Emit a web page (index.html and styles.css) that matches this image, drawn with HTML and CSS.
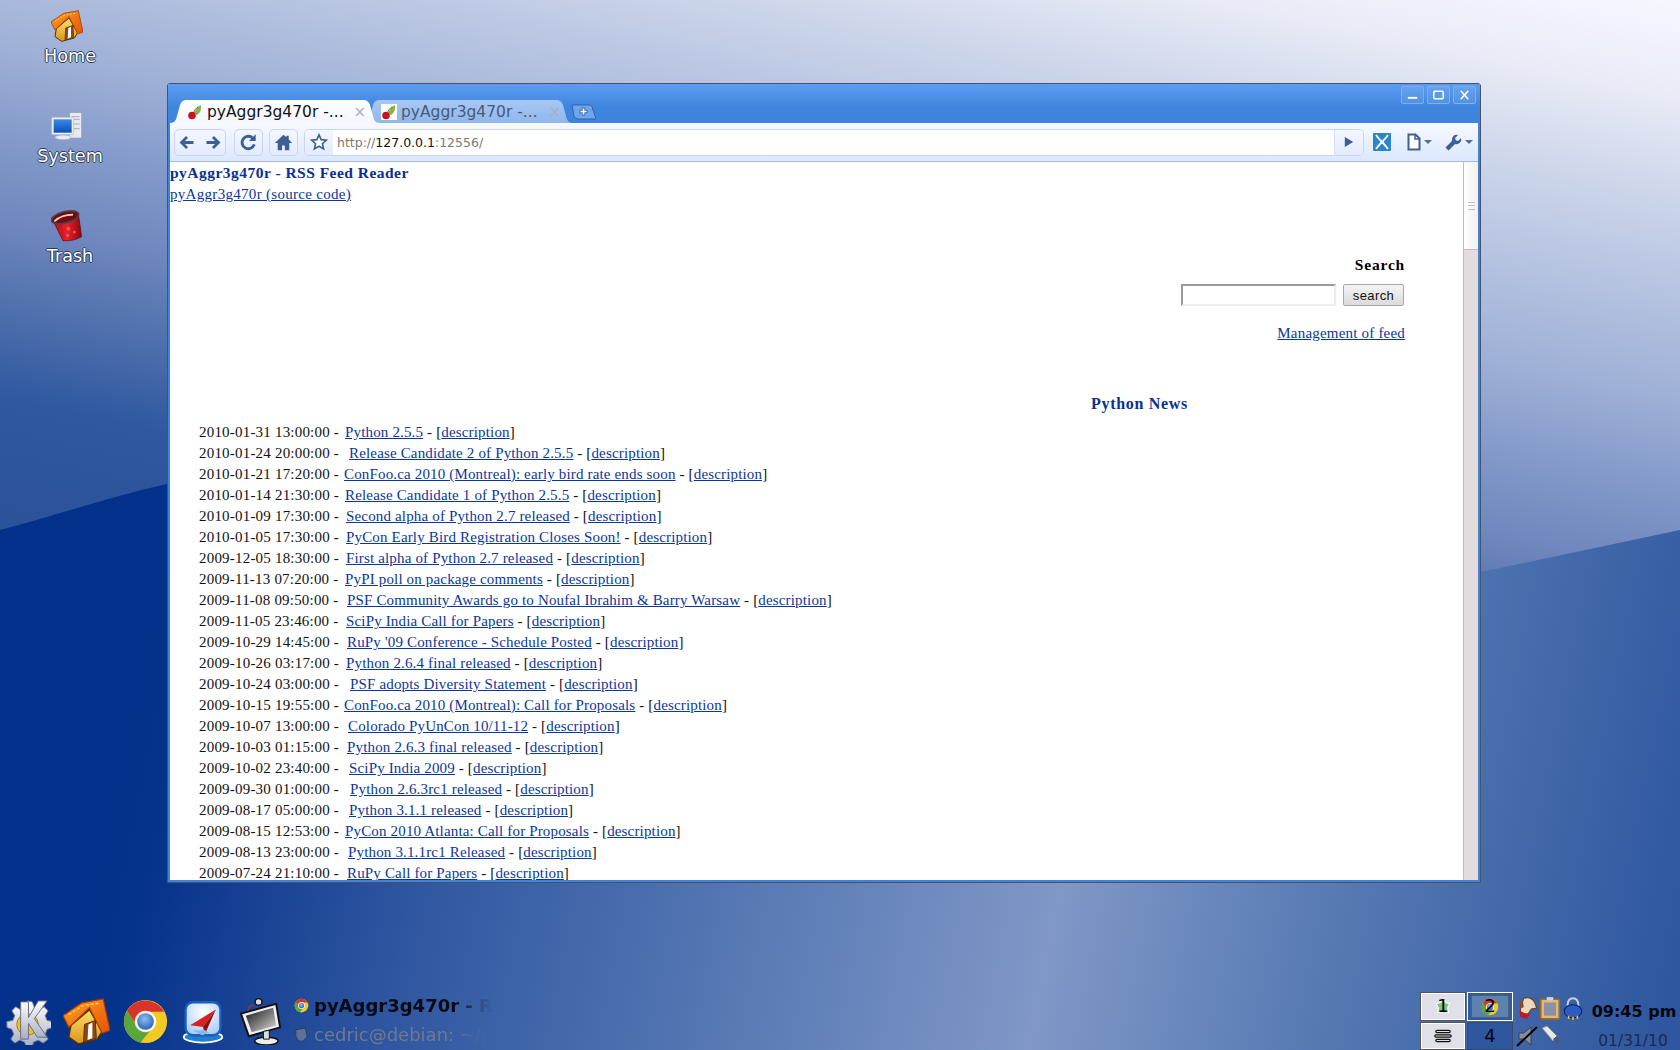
FILE: index.html
```html
<!DOCTYPE html>
<html lang="en">
<head>
<meta charset="utf-8">
<title>pyAggr3g470r</title>
<link rel="stylesheet" href="styles.css">
</head>
<body>
<svg class="sprites" width="0" height="0" aria-hidden="true">
  <defs>
    <linearGradient id="roof" x1="0" y1="0" x2="1" y2="1"><stop offset="0" stop-color="#ffa21e"/><stop offset="1" stop-color="#e8500a"/></linearGradient>
    <linearGradient id="wall" x1="0" y1="0" x2="0" y2="1"><stop offset="0" stop-color="#ffe06a"/><stop offset="1" stop-color="#d9961c"/></linearGradient>
    <linearGradient id="screen" x1="0" y1="0" x2="0" y2="1"><stop offset="0" stop-color="#3a8ae8"/><stop offset="1" stop-color="#0b50b8"/></linearGradient>
    <linearGradient id="bucket" x1="0" y1="0" x2="1" y2="0"><stop offset="0" stop-color="#a80a16"/><stop offset=".5" stop-color="#e8202c"/><stop offset="1" stop-color="#8c0810"/></linearGradient>
    <linearGradient id="metal" x1="0" y1="0" x2="0" y2="1"><stop offset="0" stop-color="#fff"/><stop offset="1" stop-color="#a9adc0"/></linearGradient>
    <linearGradient id="crt" x1="0" y1="0" x2="1" y2="1"><stop offset="0" stop-color="#111"/><stop offset="1" stop-color="#ddd"/></linearGradient>
    <radialGradient id="dial" cx=".5" cy=".3" r=".8"><stop offset="0" stop-color="#fff"/><stop offset="1" stop-color="#9fc8f5"/></radialGradient>
    <radialGradient id="iris" cx=".45" cy=".35" r=".7"><stop offset="0" stop-color="#8cc0f0"/><stop offset="1" stop-color="#1f5fb8"/></radialGradient>
    <symbol id="home" viewBox="0 0 48 48">
      <path d="M8 28 L27 12 L40 34 L35 42 L16 47 L6 40 Z" fill="url(#wall)" stroke="#5c2c04" stroke-width="1.500"/>
      <path d="M0 18 L19 5 L41 1 L48 33 L40 36 L27 10 L6 30 Z" fill="url(#roof)" stroke="#a23c04" stroke-width="1.200"/>
      <path d="M6 17 L20 8 L38 5" fill="none" stroke="#ffd060" stroke-width="1.500" stroke-dasharray="3 2"/>
      <path d="M21 45 L22 27 L33 23 L34 41 Z" fill="#8c4a10" stroke="#5a2c04"/>
      <path d="M25 43 L26 27 L30 25 L30 41 Z" fill="#fff"/>
    </symbol>
    <symbol id="chrome" viewBox="0 0 48 48">
      <circle cx="24" cy="24" r="22" fill="#f3c924"/>
      <path d="M24 14H43A22 22 0 0 0 5 13L14.500 27A10 10 0 0 1 24 14Z" fill="#d8342a"/>
      <path d="M5 13L14.500 27A10 10 0 0 0 29 33L19 45.400A22 22 0 0 1 5 13Z" fill="#5aa53c"/>
      <circle cx="24" cy="24" r="11" fill="#fff" fill-opacity=".85"/>
      <circle cx="24" cy="24" r="8.500" fill="url(#iris)"/>
    </symbol>
    <symbol id="cherry" viewBox="0 0 16 16">
      <path d="M7 10 Q9 3 14 1 Q15 8 10 11 Z" fill="#8db04a"/>
      <path d="M6 10 Q7 5 11 3" stroke="#6a7a3a" fill="none"/>
      <circle cx="5" cy="11.500" r="3.800" fill="#c8141c"/>
    </symbol>
  </defs>
</svg>

<main class="desktop">
  <svg class="wallpaper" viewBox="0 0 1680 1050" preserveAspectRatio="none" aria-hidden="true">
    <defs>
      <linearGradient id="sky" gradientUnits="userSpaceOnUse" x1="1680" y1="0" x2="1503" y2="843">
        <stop offset="0" stop-color="#f7f7fe"/>
        <stop offset=".114" stop-color="#e8ebf6"/>
        <stop offset=".227" stop-color="#ccd5ea"/>
        <stop offset=".341" stop-color="#b5c2e0"/>
        <stop offset=".455" stop-color="#9eb0d6"/>
        <stop offset=".568" stop-color="#8097c8"/>
        <stop offset=".648" stop-color="#7188bf"/>
        <stop offset=".716" stop-color="#5a78b2"/>
        <stop offset=".852" stop-color="#2f589f"/>
        <stop offset="1" stop-color="#2c5299"/>
      </linearGradient>
      <linearGradient id="sea" gradientUnits="userSpaceOnUse" x1="0" y1="950" x2="1680" y2="1286">
        <stop offset="0" stop-color="#02308a"/>
        <stop offset=".074" stop-color="#05328b"/>
        <stop offset=".23" stop-color="#2f56a0"/>
        <stop offset=".366" stop-color="#4a6fae"/>
        <stop offset=".6" stop-color="#8097c7"/>
        <stop offset=".77" stop-color="#5478b2"/>
        <stop offset=".96" stop-color="#2f579f"/>
      </linearGradient>
    </defs>
    <rect width="1680" height="1050" fill="url(#sky)"/>
    <path d="M0 530 C60 514 120 494 167 484 L1481 572 L1680 530 V1050 H0 Z" fill="url(#sea)"/>
  </svg>

  <a class="icon icon-home" href="#">
    <svg class="icon-art" viewBox="0 0 48 48"><use href="#home"/></svg>
    <span class="icon-label">Home</span>
  </a>
  <a class="icon icon-system" href="#">
    <svg class="icon-art" viewBox="0 0 48 48">
      <rect x="28" y="4" width="18" height="38" fill="#e8eaf0" stroke="#9a9eb0"/>
      <path d="M31 10h12M31 14h12M31 21h12M31 28h12" stroke="#a8acbc" stroke-width="1.500"/>
      <rect x="1" y="11" width="33" height="26" rx="2" fill="#eef0f6" stroke="#b4b8c8"/>
      <rect x="4" y="14" width="27" height="20" fill="url(#screen)"/>
      <ellipse cx="18" cy="41" rx="12" ry="3.500" fill="#e8eaf0" stroke="#a8acbc"/>
    </svg>
    <span class="icon-label">System</span>
  </a>
  <a class="icon icon-trash" href="#">
    <svg class="icon-art" viewBox="0 0 48 48">
      <path d="M2 14 L18 46 Q34 47 46 40 L41 6 Z" fill="url(#bucket)" stroke="#5a050a"/>
      <ellipse cx="21" cy="11" rx="21" ry="8.500" transform="rotate(-14 21 11)" fill="#7a0810" stroke="#45454d" stroke-width="2.400"/>
      <path d="M5 17 Q16 7 33 7" stroke="#f5d8c0" stroke-width="2.400" fill="none"/>
      <circle cx="26" cy="28" r="3" fill="#f05058"/><circle cx="35" cy="33" r="2.400" fill="#f05058"/><circle cx="25" cy="38" r="2.400" fill="#f05058"/>
    </svg>
    <span class="icon-label">Trash</span>
  </a>

  <section class="window">
    <header class="titlebar">
      <div class="tabstrip">
        <div class="tab tab-active">
          <svg class="favicon" viewBox="0 0 16 16"><use href="#cherry"/></svg>
          <span class="tab-title">pyAggr3g470r -...</span>
          <span class="tab-close">×</span>
        </div>
        <div class="tab tab-idle">
          <svg class="favicon favicon-white" viewBox="0 0 16 16"><use href="#cherry"/></svg>
          <span class="tab-title">pyAggr3g470r -...</span>
          <span class="tab-close">×</span>
        </div>
        <svg class="tab-new" viewBox="0 0 27 16" width="27" height="16"><path d="M2 1H19Q21 1 22 3L26 15H8Q5 15 4 12Z" fill="#6fa5ea" stroke="#2f65b5"/><path d="M13.500 3.500v8M9.500 7.500h8" stroke="#3c6db5" stroke-width="3.400"/><path d="M13.500 4.500v6M10.500 7.500h6" stroke="#fff" stroke-width="1.600"/></svg>
      </div>
      <div class="winbtns">
        <span class="winbtn"><svg viewBox="0 0 22 17"><path d="M6 11.500h10" stroke="#fff" stroke-width="2"/></svg></span>
        <span class="winbtn"><svg viewBox="0 0 22 17"><rect x="6" y="4.500" width="10" height="8" rx="1" fill="none" stroke="#fff" stroke-width="1.600"/></svg></span>
        <span class="winbtn"><svg viewBox="0 0 22 17"><path d="M7 4l8 9M15 4l-8 9" stroke="#fff" stroke-width="1.800"/></svg></span>
      </div>
    </header>

    <nav class="toolbar">
      <div class="navbtn navbtn-pair">
        <svg viewBox="0 0 27 26"><path d="M20 13H8M13 7l-6 6 6 6" fill="none" stroke="#3d5f94" stroke-width="3"/></svg>
        <svg viewBox="0 0 27 26"><path d="M7 13h12M14 7l6 6-6 6" fill="none" stroke="#3d5f94" stroke-width="3"/></svg>
      </div>
      <div class="navbtn navbtn-one">
        <svg viewBox="0 0 28 26"><path d="M20 15a6.500 6.500 0 1 1-1.500-6.500" fill="none" stroke="#3d5f94" stroke-width="3"/><path d="M21.500 4.500v7h-7z" fill="#3d5f94"/></svg>
      </div>
      <div class="navbtn navbtn-one">
        <svg viewBox="0 0 28 26"><path d="M14 5L5 13.500h3V21h4.500v-5h3v5H20v-7.500h3L19.500 10V6h-2.500v1.500z" fill="#3d5f94"/></svg>
      </div>
      <div class="omnibox">
        <div class="star">
          <svg viewBox="0 0 20 20" width="18" height="18"><path d="M10 2l2.400 5.400 5.800.6-4.400 3.900 1.300 5.700L10 14.700l-5.100 2.900 1.300-5.700L1.800 8l5.800-.6z" fill="#fff" stroke="#3d5f94" stroke-width="1.800"/></svg>
        </div>
        <div class="url"><span class="url-dim">http://</span>127.0.0.1<span class="url-dim">:12556/</span></div>
        <div class="go"><svg viewBox="0 0 12 14" width="10" height="12"><path d="M1 1l10 6-10 6z" fill="#3d5f94"/></svg></div>
      </div>
      <div class="ext">
        <svg viewBox="0 0 18 18" width="18" height="18"><rect width="18" height="18" rx="1" fill="#2a86c8"/><path d="M3 2c2 3 4 5 6 7-2 2-4 4-6 7M15 2c-2 3-4 5-6 7 2 2 4 4 6 7" fill="none" stroke="#fff" stroke-width="1.800"/></svg>
      </div>
      <div class="menu menu-page">
        <svg viewBox="0 0 14 18" width="14" height="18"><path d="M1.500 1.500h7l4 4v11h-11z" fill="#fff" stroke="#3d5f94" stroke-width="2"/><path d="M8 1.500v4.500h4.500" fill="none" stroke="#3d5f94" stroke-width="1.500"/></svg>
        <span class="caret"></span>
      </div>
      <div class="menu menu-tool">
        <svg viewBox="0 0 18 18" width="18" height="18"><path d="M1.500 14.500L8 8a4.800 4.800 0 0 1 6-6l-3 3 .8 2.200 2.200.8 3-3a4.800 4.800 0 0 1-6 6L4.500 17.500z" fill="#3d5f94"/></svg>
        <span class="caret"></span>
      </div>
    </nav>

    <div class="viewport">
      <article class="page">
        <h1 class="page-title">pyAggr3g470r - RSS Feed Reader</h1>
        <a class="source-link" href="#">pyAggr3g470r (source code)</a>
        <form class="search">
          <h2 class="search-title">Search</h2>
          <div class="search-row">
            <input class="search-input" type="text">
            <button class="search-btn" type="button">search</button>
          </div>
          <a class="manage" href="#">Management of feed</a>
        </form>
        <h2 class="feed-title">Python News</h2>
        <ul class="feed">
          <li><span class="stamp" style="width:147px">2010-01-31 13:00:00 -</span><a href="#">Python 2.5.5</a> - [<a href="#">description</a>]</li>
          <li><span class="stamp" style="width:151px">2010-01-24 20:00:00 -</span><a href="#">Release Candidate 2 of Python 2.5.5</a> - [<a href="#">description</a>]</li>
          <li><span class="stamp" style="width:146px">2010-01-21 17:20:00 -</span><a href="#">ConFoo.ca 2010 (Montreal): early bird rate ends soon</a> - [<a href="#">description</a>]</li>
          <li><span class="stamp" style="width:147px">2010-01-14 21:30:00 -</span><a href="#">Release Candidate 1 of Python 2.5.5</a> - [<a href="#">description</a>]</li>
          <li><span class="stamp" style="width:148px">2010-01-09 17:30:00 -</span><a href="#">Second alpha of Python 2.7 released</a> - [<a href="#">description</a>]</li>
          <li><span class="stamp" style="width:148px">2010-01-05 17:30:00 -</span><a href="#">PyCon Early Bird Registration Closes Soon!</a> - [<a href="#">description</a>]</li>
          <li><span class="stamp" style="width:148px">2009-12-05 18:30:00 -</span><a href="#">First alpha of Python 2.7 released</a> - [<a href="#">description</a>]</li>
          <li><span class="stamp" style="width:147px">2009-11-13 07:20:00 -</span><a href="#">PyPI poll on package comments</a> - [<a href="#">description</a>]</li>
          <li><span class="stamp" style="width:149px">2009-11-08 09:50:00 -</span><a href="#">PSF Community Awards go to Noufal Ibrahim &amp; Barry Warsaw</a> - [<a href="#">description</a>]</li>
          <li><span class="stamp" style="width:148px">2009-11-05 23:46:00 -</span><a href="#">SciPy India Call for Papers</a> - [<a href="#">description</a>]</li>
          <li><span class="stamp" style="width:149px">2009-10-29 14:45:00 -</span><a href="#">RuPy '09 Conference - Schedule Posted</a> - [<a href="#">description</a>]</li>
          <li><span class="stamp" style="width:148px">2009-10-26 03:17:00 -</span><a href="#">Python 2.6.4 final released</a> - [<a href="#">description</a>]</li>
          <li><span class="stamp" style="width:152px">2009-10-24 03:00:00 -</span><a href="#">PSF adopts Diversity Statement</a> - [<a href="#">description</a>]</li>
          <li><span class="stamp" style="width:146px">2009-10-15 19:55:00 -</span><a href="#">ConFoo.ca 2010 (Montreal): Call for Proposals</a> - [<a href="#">description</a>]</li>
          <li><span class="stamp" style="width:150px">2009-10-07 13:00:00 -</span><a href="#">Colorado PyUnCon 10/11-12</a> - [<a href="#">description</a>]</li>
          <li><span class="stamp" style="width:149px">2009-10-03 01:15:00 -</span><a href="#">Python 2.6.3 final released</a> - [<a href="#">description</a>]</li>
          <li><span class="stamp" style="width:151px">2009-10-02 23:40:00 -</span><a href="#">SciPy India 2009</a> - [<a href="#">description</a>]</li>
          <li><span class="stamp" style="width:152px">2009-09-30 01:00:00 -</span><a href="#">Python 2.6.3rc1 released</a> - [<a href="#">description</a>]</li>
          <li><span class="stamp" style="width:151px">2009-08-17 05:00:00 -</span><a href="#">Python 3.1.1 released</a> - [<a href="#">description</a>]</li>
          <li><span class="stamp" style="width:147px">2009-08-15 12:53:00 -</span><a href="#">PyCon 2010 Atlanta: Call for Proposals</a> - [<a href="#">description</a>]</li>
          <li><span class="stamp" style="width:150px">2009-08-13 23:00:00 -</span><a href="#">Python 3.1.1rc1 Released</a> - [<a href="#">description</a>]</li>
          <li><span class="stamp" style="width:149px">2009-07-24 21:10:00 -</span><a href="#">RuPy Call for Papers</a> - [<a href="#">description</a>]</li>
        </ul>
      </article>
      <div class="scrollbar"><div class="thumb"><span class="grip"></span></div></div>
    </div>
  </section>

  <footer class="panel">
    <div class="launchers">
      <svg class="launch" viewBox="0 0 48 48">
        <path d="M24 3l5 1 2 6 5 2 5-3 4 4-3 5 2 5 6 1v6l-6 2-2 5 3 5-5 4-5-3-5 2-1 5h-6l-2-5-5-2-5 3-4-4 3-5-2-5-5-2v-6l6-1 2-5-3-5 4-4 5 3 5-2z" fill="url(#metal)" stroke="#7c8094"/>
        <circle cx="24" cy="27" r="11" fill="#f0c020" stroke="#a08018"/>
        <path d="M17 4h8v16L35 3h9L31 21l13 19h-10L25 26v16h-8z" fill="url(#metal)" stroke="#6a6e84"/>
      </svg>
      <svg class="launch" viewBox="0 0 48 48"><use href="#home"/></svg>
      <svg class="launch" viewBox="0 0 48 48"><use href="#chrome"/></svg>
      <svg class="launch launch-mail" viewBox="0 0 48 48">
        <ellipse cx="24" cy="41" rx="21" ry="6" fill="#1f7fd0" stroke="#fff" stroke-width="2"/>
        <rect x="5" y="3" width="38" height="36" rx="8" fill="url(#dial)" stroke="#1a5fc0" stroke-width="2.500"/>
        <path d="M38 11L10 28l14 2z" fill="#d82020"/><path d="M38 11L24 30l2 8z" fill="#8a1010"/>
        <path d="M13 34l12-1 6 3-8 3z" fill="#8fb8e8"/>
      </svg>
      <svg class="launch" viewBox="0 0 48 48">
        <path d="M4 16L40 6l4 24-32 9z" fill="#f0f0f0" stroke="#111" stroke-width="2"/>
        <path d="M9 18L37 10l3 18-25 7z" fill="url(#crt)"/>
        <ellipse cx="30" cy="44" rx="12" ry="4" fill="#eee" stroke="#111" stroke-width="1.500"/>
        <path d="M27 34v8h6v-9z" fill="#ddd" stroke="#111"/>
        <circle cx="22" cy="4" r="3.500" fill="#ddd" stroke="#111" stroke-width="1.500"/>
        <path d="M17 8 Q12 6 11 13" stroke="#a03030" stroke-width="1.500" fill="none"/>
      </svg>
    </div>
    <div class="tasks">
      <div class="task task-active"><svg class="task-ico" viewBox="0 0 48 48"><use href="#chrome"/></svg><span>pyAggr3g470r - R</span></div>
      <div class="task task-idle">
        <svg class="task-ico" viewBox="0 0 16 16"><path d="M2 3l10-2 2 9-4 5H5L2 10z" fill="#5f7196" stroke="#2c3c5e"/></svg>
        <span>cedric@debian: ~/p</span>
      </div>
    </div>
    <div class="spacer"></div>
    <div class="pager">
      <div class="desk desk-light"><svg viewBox="0 0 16 16" width="18" height="18"><path d="M8 1l2 3 4 1-2 4 1 4-5-1-5 1 1-4-2-4 4-1z" fill="#7cc47a" stroke="#fff"/></svg><b>1</b></div>
      <div class="desk desk-current"><span class="desk-inner"><svg viewBox="0 0 48 48" width="18" height="18"><use href="#chrome"/></svg></span><b>2</b></div>
      <div class="desk desk-light"><svg viewBox="0 0 20 14" width="20" height="14"><path d="M4 2.500h12M3 7h14M4 11.500h12" stroke="#111" stroke-width="3.600" stroke-linecap="round"/><path d="M4 2.500h12M3 7h14M4 11.500h12" stroke="#ddd" stroke-width="1" stroke-linecap="round"/></svg></div>
      <div class="desk desk-dark"><b>4</b></div>
    </div>
    <div class="tray">
      <svg viewBox="0 0 20 22"><path d="M7 2q7-2 10 4l2 5-5 1-2 3-2 2-6-2 0-5 2-5z" fill="#ecd8bc" stroke="#6a4020"/><path d="M3 13l5 3 5 0-3 5-6-2z" fill="#c01824"/><path d="M6 3q-4 3-2 9l3-2z" fill="#8a4a28"/></svg>
      <svg viewBox="0 0 20 22"><rect x="1.500" y="3" width="17" height="18" rx="1" fill="#e0b878" stroke="#a06a20" stroke-width="1.500"/><rect x="4.500" y="6" width="11" height="12" fill="#8a90a8"/><rect x="7" y="1" width="6" height="3" fill="#d0d4de"/></svg>
      <svg viewBox="0 0 20 22"><path d="M5 9q0-7 5-7t5 7" fill="none" stroke="#c8d0e0" stroke-width="1.800"/><path d="M2 14a8 6 0 0 1 16 0 8 6 0 0 1-16 0z" fill="#2c5cc0" stroke="#0c2060"/><path d="M6 18v3M10 19v3M14 18v3" stroke="#f0c020" stroke-width="1.500"/></svg>
      <svg viewBox="0 0 22 22"><path d="M3 8h5l7-6v18l-7-6H3z" fill="#8a8e9c" stroke="#3a3e50"/><path d="M1 21L21 2" stroke="#000" stroke-width="2"/></svg>
      <svg viewBox="0 0 22 22"><path d="M3 3l5-2 10 10-4 5z" fill="#e8e8e8" stroke="#8a8a8a"/><path d="M14 14l4-3 3 5-2 3z" fill="#4a5878"/></svg>
    </div>
    <div class="clock">
      <div class="time">09:45 pm</div>
      <div class="date">01/31/10</div>
    </div>
  </footer>
</main>
</body>
</html>
```

FILE: styles.css
```css
* { box-sizing: border-box; }
html, body { margin: 0; padding: 0; }
body { width: 1680px; height: 1050px; overflow: hidden; font-family: "DejaVu Sans", sans-serif; }
.sprites { position: absolute; }
.desktop { position: relative; width: 1680px; height: 1050px; overflow: hidden; background: #3f62a6; }
.wallpaper { position: absolute; inset: 0; width: 1680px; height: 1050px; }

.icon { position: absolute; width: 100px; left: 20px; display: flex; flex-direction: column; align-items: center; text-decoration: none; }
.icon-home { top: 10px; }
.icon-system { top: 110px; }
.icon-trash { top: 210px; }
.icon-art { width: 32px; height: 32px; margin-right: 6px; }
.icon-label { margin-top: 4px; font-size: 17.600px; line-height: 20px; color: #fff;
  text-shadow: -1px 0 #2b3a5e, 1px 0 #2b3a5e, 0 -1px #2b3a5e, 0 1px #2b3a5e; }

.window { position: absolute; left: 167px; top: 83px; width: 1314px; height: 800px; display: flex; flex-direction: column;
  padding: 0 2px 2px; border: 1px solid #4a5264; border-radius: 3px 3px 0 0; background: #3e84dc; }
.titlebar { height: 39px; flex: none; display: flex; justify-content: space-between; margin: 0 -2px; padding: 0 4px 0 2px;
  background: linear-gradient(#5c9df2, #3f85dd 60%, #3e84dc); }
.tabstrip { display: flex; align-items: flex-end; padding-top: 16px; }
.tab { height: 23px; width: 210px; display: flex; align-items: center; gap: 4px; padding: 0 15px 0 17px; font-size: 15.500px; white-space: nowrap; margin-right: -17px;
  clip-path: path("M0 23C5 23 6 20 7 16L10 5C11 2 13 0 17 0L193 0C197 0 199 2 200 5L203 16C204 20 205 23 210 23Z"); }
.tab-active { background: linear-gradient(#fff, #f2f6ff); color: #111; position: relative; z-index: 1; padding-right: 14px; }
.tab-idle { background: linear-gradient(#a8c8f4, #8fb6ec); color: #4a5a74; padding: 0 12px 0 18px; }
.tab-title { flex: 1; }
.tab-close { color: #a7b0c0; font-size: 15px; line-height: 16px; }
.favicon { width: 16px; height: 16px; flex: none; }
.favicon-white { background: #fff; }
.tab-new { margin: 0 0 3px 14px; flex: none; }
.winbtns { display: flex; gap: 3px; padding-top: 2px; }
.winbtn { width: 23px; height: 18px; border: 1px solid #7fb0ee; border-radius: 2px; background: rgba(255,255,255,.08); }
.winbtn svg { display: block; width: 100%; height: 100%; }

.toolbar { height: 39px; flex: none; display: flex; align-items: center; padding: 0 5px 0 4px; border-bottom: 1px solid #a9b8d8;
  background: linear-gradient(#f7f9ff, #dbe7fd); }
.navbtn { height: 27px; display: flex; border: 1px solid #c9d6f0; border-radius: 5px; background: linear-gradient(#f4f7ff, #e2ebfd); }
.navbtn svg { height: 100%; flex: none; }
.navbtn-pair { width: 52px; margin-right: 8px; }
.navbtn-pair svg { width: 25px; }
.navbtn-one { width: 29px; margin-right: 6px; }
.omnibox { height: 27px; flex: 1; display: flex; align-items: stretch; background: #fff; border: 1px solid #c9d6f0; border-radius: 5px; }
.star { width: 28px; display: flex; align-items: center; justify-content: center; background: linear-gradient(#f4f7ff, #e2ebfd); border-radius: 4px 0 0 4px; }
.url { flex: 1; padding-left: 4px; font-size: 12.500px; line-height: 25px; color: #111; }
.url-dim { color: #7a7a7a; }
.go { width: 29px; display: flex; align-items: center; justify-content: center; background: linear-gradient(#f4f7ff, #e2ebfd); border-left: 1px solid #d5def2; border-radius: 0 4px 4px 0; }
.ext { margin-left: 9px; height: 18px; width: 18px; }
.ext svg, .menu svg { display: block; }
.menu { display: flex; align-items: center; gap: 3px; }
.menu-page { margin-left: 16px; }
.menu-tool { margin-left: 12px; }
.caret { width: 0; height: 0; border: 4px solid transparent; border-top-color: #4a6ea6; border-bottom: 0; }

.viewport { flex: 1; min-height: 0; display: flex; background: #fff; overflow: hidden; }
.page { flex: 1; min-width: 0; overflow: hidden; font-family: "Liberation Serif", serif; font-size: 15px; color: #111; padding-top: 1px; }
.page a { color: #0a36a0; }
.page-title { margin: 0; font-size: 15.500px; line-height: 20px; font-weight: 700; color: #0a2f95; letter-spacing: .48px; }
.source-link { display: block; margin-top: 1px; line-height: 21px; font-size: 15px; width: max-content; letter-spacing: .3px; }
.search { display: flex; flex-direction: column; align-items: flex-end; margin: 50px 58px 0 0; }
.search-title { margin: 0; font-size: 15.500px; line-height: 20px; font-weight: 700; color: #000; letter-spacing: .8px; }
.search-row { display: flex; gap: 7px; margin-top: 9px; padding-right: 1px; }
.search-input { width: 155px; height: 22px; padding: 0; border: 2px solid; border-color: #9a9a9a #ededed #ededed #9a9a9a; background: #fff; }
.search-btn { width: 61px; height: 22px; padding: 0; font-family: "Liberation Sans", sans-serif; font-size: 13px; letter-spacing: .4px; color: #111; border: 1px solid #a8a8a8; border-radius: 2px; background: linear-gradient(#f4f4f4, #dcdada); }
.manage { margin-top: 17px; line-height: 20px; letter-spacing: .2px; }
.feed-title { margin: 51px 0 0; padding-left: 921px; font-size: 16px; line-height: 20px; font-weight: 700; color: #0a2f95; letter-spacing: .7px; }
.feed { list-style: none; margin: 8px 0 0; padding: 0 0 0 29px; }
.feed li { height: 21px; line-height: 21px; white-space: nowrap; letter-spacing: .16px; }
.stamp { display: inline-block; margin-right: -1px; letter-spacing: .2px; }
.scrollbar { width: 15px; flex: none; background: #e3dcdc; border-left: 1px solid #bdbdbd; }
.thumb { height: 88px; display: flex; align-items: center; justify-content: center; background: linear-gradient(90deg, #fff, #f3f0ed); border-bottom: 1px solid #bdbdbd; }
.grip { width: 7px; height: 8px; border-top: 1px solid #c0c0c0; border-bottom: 1px solid #c0c0c0; background: linear-gradient(#c0c0c0, #c0c0c0) center / 100% 1px no-repeat; }

.panel { position: absolute; left: 0; right: 0; bottom: 0; height: 60px; display: flex; align-items: stretch; }
.launchers { display: flex; align-items: flex-end; gap: 12px; padding: 0 0 5px 4px; }
.launch { width: 47px; height: 47px; flex: none; }
.launch-mail { width: 44px; }
.tasks { width: 210px; margin-left: 10px; padding-top: 1px; display: flex; flex-direction: column; -webkit-mask-image: linear-gradient(90deg, #000 76%, rgba(0,0,0,.15) 90%, transparent 95%); mask-image: linear-gradient(90deg, #000 76%, rgba(0,0,0,.15) 90%, transparent 95%); }
.task { height: 29px; display: flex; align-items: center; gap: 5px; white-space: nowrap; font-size: 18px; }
.task-ico { width: 15px; height: 15px; flex: none; }
.task-active { font-weight: 700; color: #0a0a14; }
.task-idle { color: #6f7a90; }
.spacer { flex: 1; }
.pager { display: grid; grid-template-columns: 46px 46px; grid-template-rows: 29px 28px; gap: 1px; align-self: flex-end; }
.desk { position: relative; display: flex; align-items: center; justify-content: center; border: 1px solid #3a4a66; }
.desk b { position: absolute; inset: 0; text-align: center; font-size: 18px; line-height: 26px; font-weight: 400; color: #000; }
.desk-light { background: #e0e0e8; border-color: #555; box-shadow: inset 0 0 0 1px #fff; }
.desk-current { background: #34599f; border-color: #fff; padding: 2px 3px; }
.desk-inner { flex: 1; align-self: stretch; display: flex; align-items: center; justify-content: center; background: #5b83ad; border: 1px solid #47607f; }
.desk-dark { background: #2f57a0; }
.tray { width: 69px; margin: 0 4px 0 2px; align-self: flex-end; display: grid; grid-template-columns: repeat(3, 23px); grid-auto-rows: 28px; align-items: center; justify-items: center; }
.tray svg { width: 22px; height: 24px; }
.clock { width: 92px; display: flex; flex-direction: column; align-items: center; padding-top: 11px; }
.time { font-size: 16px; font-weight: 700; line-height: 22px; color: #05060f; }
.date { margin-top: 8px; margin-right: 2px; font-size: 15.500px; line-height: 20px; color: #1a2a50; }
```
